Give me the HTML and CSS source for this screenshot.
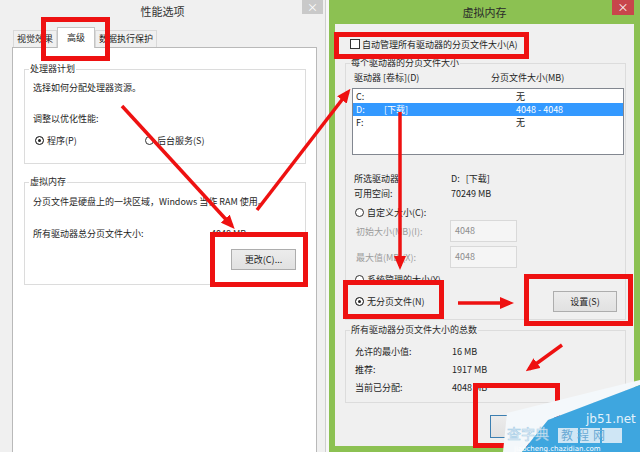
FILE: index.html
```html
<!DOCTYPE html>
<html lang="zh-CN">
<head>
  <meta charset="UTF-8">
  <meta name="viewport" content="width=device-width, initial-scale=1.0">
  <title>性能选项 - 虚拟内存</title>
  <link rel="stylesheet" href="styles.css">
</head>
<body>
  <div class="desk">
    <!-- 性能选项 -->
    <section class="win win-perf">
      <header class="titlebar">性能选项<span class="close">×</span></header>
      <div class="perf-body">
        <div class="tabs">
          <span class="tab">视觉效果</span>
          <span class="tab active">高级</span>
          <span class="tab">数据执行保护</span>
        </div>
        <div class="tab-panel">
          <fieldset class="group group-cpu">
            <legend>处理器计划</legend>
            <p class="line">选择如何分配处理器资源。</p>
            <p class="line gap-lg">调整以优化性能:</p>
            <div class="radio-pair">
              <span class="opt"><span class="radio on"></span>程序(P)</span>
              <span class="opt"><span class="radio"></span>后台服务(S)</span>
            </div>
          </fieldset>
          <fieldset class="group group-vmem">
            <legend>虚拟内存</legend>
            <p class="line">分页文件是硬盘上的一块区域，Windows 当作 RAM 使用。</p>
            <div class="size-row"><span>所有驱动器总分页文件大小:</span><span>4048 MB</span></div>
            <div class="btn-row"><span class="btn btn-change">更改(C)...</span></div>
          </fieldset>
        </div>
      </div>
    </section>

    <!-- 虚拟内存 -->
    <section class="win win-vm">
      <header class="titlebar">虚拟内存<span class="close">×</span></header>
      <div class="vm-body">
        <div class="check-row"><span class="checkbox"></span>自动管理所有驱动器的分页文件大小(A)</div>
        <fieldset class="group group-drives">
          <legend>每个驱动器的分页文件大小</legend>
          <div class="list-head"><span>驱动器 [卷标](D)</span><span>分页文件大小(MB)</span></div>
          <div class="drive-list">
            <div class="drive"><span>C:</span><span></span><span>无</span></div>
            <div class="drive selected"><span>D:</span><span>[下载]</span><span>4048 - 4048</span></div>
            <div class="drive"><span>F:</span><span></span><span>无</span></div>
          </div>
          <div class="info"><span>所选驱动器</span><span>D:&nbsp;&nbsp;&nbsp;[下载]</span></div>
          <div class="info"><span>可用空间:</span><span>70249 MB</span></div>
          <div class="radio-line"><span class="radio"></span>自定义大小(C):</div>
          <div class="field"><span class="field-label">初始大小(MB)(I):</span><span class="input">4048</span></div>
          <div class="field field-max"><span class="field-label">最大值(MB)(X):</span><span class="input">4048</span></div>
          <div class="radio-line radio-sys"><span class="radio"></span>系统管理的大小(Y)</div>
          <div class="set-row"><span class="radio on"></span>无分页文件(N)<span class="btn btn-set">设置(S)</span></div>
        </fieldset>
        <fieldset class="group group-total">
          <legend>所有驱动器分页文件大小的总数</legend>
          <div class="total"><span>允许的最小值:</span><span>16 MB</span></div>
          <div class="total"><span>推荐:</span><span>1917 MB</span></div>
          <div class="total"><span>当前已分配:</span><span>4048 MB</span></div>
        </fieldset>
        <!-- labels are hidden under the site stamp in the screenshot -->
        <div class="dialog-buttons">
          <span class="btn btn-ok" aria-label="确定"></span>
          <span class="btn" aria-label="取消"></span>
        </div>
      </div>
    </section>
  </div>

  <!-- annotations drawn over the screenshot -->
  <svg class="marks" width="640" height="452" viewBox="0 0 640 452">
    <defs>
      <marker id="head" markerWidth="14" markerHeight="12" refX="10" refY="6" orient="auto" markerUnits="userSpaceOnUse">
        <path d="M0,0 L14,6 L0,12 z" fill="#ee1111"/>
      </marker>
    </defs>
    <g fill="none" stroke="#ee1111" stroke-width="5">
      <rect x="43.5" y="19.5" width="64" height="39"/>
      <rect x="212.5" y="234.5" width="93" height="50"/>
      <rect x="336.5" y="34.5" width="190" height="22"/>
      <rect x="345.5" y="282.5" width="96" height="34"/>
      <rect x="526.5" y="276.5" width="104" height="47"/>
      <rect x="475.5" y="385.5" width="82" height="60"/>
    </g>
    <g stroke="#ee1111" stroke-width="3.5" marker-end="url(#head)">
      <line x1="122" y1="106" x2="232" y2="226"/>
      <line x1="257" y1="210" x2="348" y2="92"/>
      <line x1="400" y1="112" x2="400" y2="266"/>
      <line x1="458" y1="303" x2="510" y2="303"/>
      <line x1="562" y1="345" x2="529" y2="369"/>
    </g>
    <g class="stamp">
      <polygon points="507,413 640,380 640,385 548,420 522,452 503,452" fill="#f4f8fb"/>
      <polygon points="522,452 548,420 640,385 640,452" fill="#3ea6df"/>
      <rect x="558" y="428" width="20" height="15" fill="#cfe6f5"/>
      <rect x="580" y="428" width="20" height="15" fill="#cfe6f5"/>
      <rect x="602" y="428" width="20" height="15" fill="#cfe6f5"/>
      <text x="586" y="423" class="stamp-site">jb51.net</text>
      <text x="561" y="440" class="stamp-cn">教 程 网</text>
      <text x="507" y="439" class="stamp-big">查字典</text>
      <text x="514" y="451" class="stamp-url">jiaocheng.chazidian.com</text>
    </g>
  </svg>
</body>
</html>
```

FILE: styles.css
```css
* {
  box-sizing: border-box;
}

body {
  margin: 0;
  width: 640px;
  height: 452px;
  overflow: hidden;
  position: relative;
  background: #f7f7f7;
  font-family: "Noto Sans CJK SC", "Noto Sans", sans-serif;
  font-size: 9px;
  color: #1e1e1e;
}

p {
  margin: 0;
}

.desk {
  display: flex;
  gap: 3px;
  height: 452px;
}

/* window chrome */
.titlebar {
  position: relative;
  height: 22px;
  line-height: 22px;
  text-align: center;
  font-size: 11px;
  color: #333;
}

.close {
  position: absolute;
  top: 0;
  right: 2px;
  width: 21px;
  height: 14px;
  line-height: 14px;
  text-align: center;
  font-size: 11px;
  color: #fff;
  background: #c9c9c9;
}

.win-perf {
  width: 326px;
  height: 452px;
  overflow: hidden;
  background: #f0f0f0;
  border-right: 1px solid #cfcfcf;
}

.win-vm {
  width: 311px;
  height: 452px;
  display: flex;
  flex-direction: column;
  padding: 0 6px 6px;
  background: #8cc152;
}

.win-vm .titlebar {
  height: 24px;
  line-height: 24px;
  color: #2a2a2a;
}

.win-vm .close {
  right: 0;
  width: 22px;
  height: 15px;
  line-height: 15px;
  background: #c8454b;
}

/* shared controls */
.group {
  margin: 0;
  min-width: 0;
  border: 1px solid #dcdcdc;
}

.group legend {
  padding: 0 1px;
  line-height: 12px;
  color: #2a2a2a;
}

.line {
  line-height: 12px;
}

.radio {
  display: inline-block;
  width: 9px;
  height: 9px;
  margin-right: 3px;
  border: 1px solid #333;
  border-radius: 50%;
  background: #fff;
  vertical-align: -1px;
}

.radio.on {
  background: #222;
  box-shadow: inset 0 0 0 2px #fff;
}

.checkbox {
  display: inline-block;
  width: 10px;
  height: 10px;
  margin-right: 2px;
  border: 1px solid #333;
  background: #fff;
}

.btn {
  display: inline-flex;
  align-items: center;
  justify-content: center;
  width: 65px;
  height: 21px;
  border: 1px solid #adadad;
  background: linear-gradient(#ececec, #e1e1e1);
  color: #222;
}

/* 性能选项 body */
.perf-body {
  padding-left: 12px;
}

.tabs {
  display: flex;
  align-items: flex-end;
  height: 20px;
  margin-top: 5px;
  padding-left: 1px;
}

.tab {
  height: 17px;
  line-height: 16px;
  padding: 0 3px;
  border: 1px solid #d9d9d9;
  border-bottom: 0;
  background: #f0f0f0;
}

.tab.active {
  position: relative;
  z-index: 1;
  height: 21px;
  line-height: 20px;
  margin-bottom: -1px;
  padding: 0 9px;
  border-color: #c4c4c4;
  background: #fff;
}

.tab-panel {
  width: 305px;
  height: 420px;
  padding: 0 10px 0 11px;
  border: 1px solid #b9b9b9;
  background: #fff;
}

.group-cpu {
  margin-top: 15px;
  padding: 7px 8px 16px;
}

.group-cpu legend,
.group-vmem legend {
  margin-left: -4px;
}

.gap-lg {
  margin-top: 19px;
}

.radio-pair {
  display: flex;
  margin-top: 10px;
  line-height: 12px;
}

.radio-pair .opt {
  width: 110px;
  padding-left: 2px;
}

.group-vmem {
  margin-top: 12px;
  padding: 8px 9px 14px 8px;
}

.size-row {
  display: grid;
  grid-template-columns: 178px 1fr;
  margin-top: 20px;
  line-height: 12px;
}

.btn-row {
  display: flex;
  justify-content: flex-end;
  margin-top: 9px;
}

/* 虚拟内存 body */
.vm-body {
  flex: 1;
  background: #f0f0f0;
}

.check-row {
  display: flex;
  align-items: center;
  height: 12px;
  margin-top: 14px;
  padding-left: 15px;
}

.group-drives {
  margin: 7px 8px 0 10px;
  padding: 3px 1px 7px 6px;
}

.group-drives legend {
  margin-left: -2px;
}

.list-head {
  display: grid;
  grid-template-columns: 137px 1fr;
  padding-left: 2px;
  line-height: 12px;
}

.drive-list {
  height: 67px;
  margin: 4px 0 16px;
  padding-top: 1px;
  border: 1px solid #828790;
  background: #fff;
}

.drive {
  display: grid;
  grid-template-columns: 28px 132px 1fr;
  height: 13px;
  line-height: 13px;
  padding-left: 3px;
}

.drive.selected {
  background: #3399ff;
  color: #fff;
}

.info {
  display: grid;
  grid-template-columns: 97px 1fr;
  padding-left: 2px;
  line-height: 15px;
}

.radio-line {
  margin-top: 6px;
  padding-left: 3px;
  line-height: 12px;
}

.field {
  display: flex;
  align-items: center;
  height: 22px;
  margin-top: 1px;
  padding-left: 4px;
  color: #9c9c9c;
}

.field-max {
  margin-top: 4px;
}

.field-label {
  width: 94px;
}

.input {
  width: 67px;
  height: 22px;
  line-height: 20px;
  padding-left: 4px;
  border: 1px solid #d9d9d9;
  background: #f5f5f5;
  color: #8e8e8e;
}

.set-row {
  display: flex;
  align-items: center;
  height: 21px;
  margin-top: 5px;
  padding-left: 3px;
}

.btn-set {
  width: 64px;
  margin: 0 7px 0 auto;
}

.group-total {
  margin: 4px 8px 0 10px;
  padding: 7px 1px 5px 9px;
}

.group-total legend {
  margin-left: -5px;
}

.total {
  display: grid;
  grid-template-columns: 97px 1fr;
  line-height: 18px;
}

.dialog-buttons {
  display: flex;
  justify-content: flex-end;
  gap: 7px;
  margin-top: 12px;
  padding-right: 7px;
}

.dialog-buttons .btn {
  height: 23px;
}

.btn-ok {
  border-color: #3c7fb1;
}

/* overlay: red marks and site stamp */
.marks {
  position: absolute;
  top: 0;
  left: 0;
  pointer-events: none;
}

.stamp text {
  font-family: "DejaVu Sans", sans-serif;
}

.stamp-site {
  font-size: 12px;
  fill: #e3f2fb;
}

.stamp-cn {
  font-family: "Noto Sans CJK SC", sans-serif;
  font-size: 12px;
  fill: #6aaad4;
}

.stamp-big {
  font-family: "Noto Sans CJK SC", sans-serif;
  font-size: 14px;
  fill: #ffffff;
  stroke: #9bc7e4;
  stroke-width: 0.6;
  opacity: 0.85;
}

.stamp-url {
  font-size: 7px;
  fill: #ffffff;
}
```
